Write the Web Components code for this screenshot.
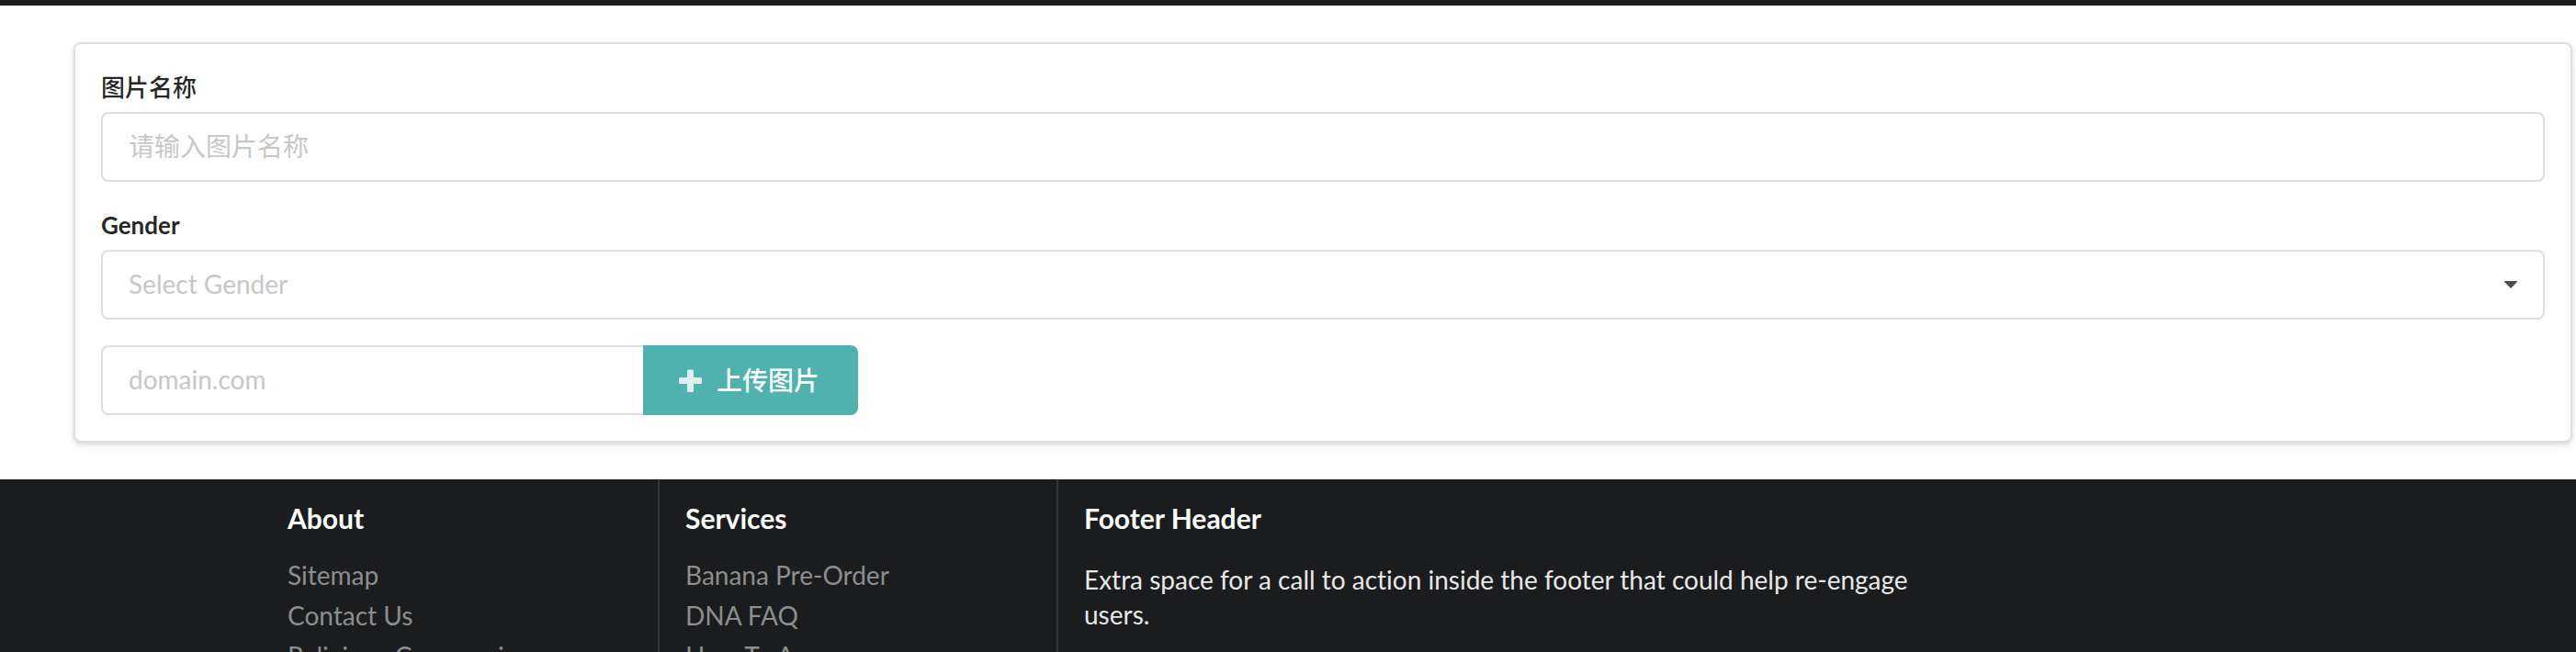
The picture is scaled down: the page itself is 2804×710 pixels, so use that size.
<!DOCTYPE html>
<html lang="zh-CN">
<head>
<meta charset="utf-8">
<title>图片上传</title>
<style>
html { height: 100%; }
body { margin: 0; height: 100%; overflow: hidden; background: #fff; color: rgba(0,0,0,.87); font: 28px/40px Lato, "Noto Sans CJK SC", sans-serif; font-variant-ligatures: none; }
</style>
</head>
<body>
<app-page>
  <form-card>
    <text-field label="图片名称" placeholder="请输入图片名称" lang="zh-CN"></text-field>
    <select-field label="Gender" placeholder="Select Gender"></select-field>
    <upload-field placeholder="domain.com">上传图片</upload-field>
  </form-card>
  <page-footer slot="footer">
    <footer-column heading="About">
      <footer-link>Sitemap</footer-link>
      <footer-link>Contact Us</footer-link>
      <footer-link>Religious Ceremonies</footer-link>
    </footer-column>
    <footer-column heading="Services" divided>
      <footer-link>Banana Pre-Order</footer-link>
      <footer-link>DNA FAQ</footer-link>
      <footer-link>How To Access</footer-link>
    </footer-column>
    <footer-column heading="Footer Header" divided>
      <footer-note>Extra space for a call to action inside the footer that could help re-engage users.</footer-note>
    </footer-column>
  </page-footer>
</app-page>
<script>
const define = (name, render) => customElements.define(name, class extends HTMLElement {
  constructor() {
    super();
    this.attachShadow({ mode: "open" }).innerHTML = render(this);
  }
});
const attr = (el, name) => el.getAttribute(name) || "";

const fieldStyle = `
  *, ::before { box-sizing: border-box; }
  :host { display: block; }
  label { display: block; margin-bottom: 8px; font-size: 26px; line-height: 38px; font-weight: 700; }
  :host([lang="zh-CN"]) label { font-weight: 500; }
  input, select { display: block; width: 100%; height: 76px; margin: 0; padding: 0 28px 2px; border: 2px solid #dededf; border-radius: 8px; background: #fff; color: rgba(0,0,0,.87); font: inherit; font-variant-ligatures: none; outline: none; }
  ::placeholder { color: #c7c7c7; opacity: 1; }
`;

define("app-page", () => `
  <style>
    :host { display: block; }
    header { height: 6px; box-sizing: border-box; background: #1b1c1d; border-bottom: 1px solid #151116; }
    main { padding: 40px 4px 40px 80px; }
  </style>
  <header></header>
  <main><slot></slot></main>
  <slot name="footer"></slot>`);

define("form-card", () => `
  <style>
    :host { display: block; }
    form { display: flex; flex-direction: column; gap: 28px; padding: 28px; border: 2px solid #dededf; border-radius: 8px; background: #fff; box-shadow: 0 2px 4px rgba(34,36,38,.12), 0 4px 12px rgba(34,36,38,.06); }
  </style>
  <form><slot></slot></form>`);

define("text-field", el => `
  <style>${fieldStyle}</style>
  <label for="field">${attr(el, "label")}</label>
  <input id="field" type="text" placeholder="${attr(el, "placeholder")}">`);

define("select-field", el => `
  <style>${fieldStyle}
    .box { display: grid; align-items: center; }
    select, svg { grid-area: 1 / 1; }
    select { appearance: none; color: #c7c7c7; }
    svg { justify-self: end; width: 14px; height: 8px; margin-right: 30px; pointer-events: none; }
  </style>
  <label for="field">${attr(el, "label")}</label>
  <div class="box">
    <select id="field"><option value="">${attr(el, "placeholder")}</option></select>
    <svg viewBox="0 0 14 8" fill="#4c4c4d" aria-hidden="true"><path d="M0 0H14V1L7 8L0 1Z"/></svg>
  </div>`);

define("upload-field", el => `
  <style>${fieldStyle}
    .row { display: flex; }
    input { width: 590px; border-right: 0; border-radius: 8px 0 0 8px; }
    button { display: flex; align-items: center; gap: 16px; height: 76px; padding: 0 42px 0 38px; border: 0; border-radius: 0 8px 8px 0; background: #50b2ae; color: #fff; font: inherit; font-weight: 500; line-height: 28px; }
    svg { width: 26px; height: 26px; }
  </style>
  <div class="row">
    <input type="text" aria-label="${attr(el, "placeholder")}" placeholder="${attr(el, "placeholder")}">
    <button type="button">
      <svg viewBox="0 0 26 26" fill="#dcf0ef" aria-hidden="true"><path d="M11.500 1.500H15.500Q17 1.500 17 3V10H24.500Q26 10 26 11.500V15.500Q26 17 24.500 17H17V24.500Q17 26 15.500 26H11.500Q10 26 10 24.500V17H2.500Q1 17 1 15.500V11.500Q1 10 2.500 10H10V3Q10 1.500 11.500 1.500Z"/></svg>
      <span><slot></slot></span>
    </button>
  </div>`);

define("page-footer", () => `
  <style>
    :host { display: block; background: #1b1c1d; color: #fff; }
    footer { display: grid; grid-template-columns: 431fr 434fr 1010fr 359fr; max-width: 2234px; margin: 0 auto; }
  </style>
  <footer><slot></slot></footer>`);

define("footer-column", el => `
  <style>
    :host { display: block; padding: 22px 28px 28px; }
    :host([divided]) { border-left: 2px solid #353637; }
    h4 { margin: 0 0 20px; font-size: 30px; line-height: 40px; font-weight: 700; }
  </style>
  <h4>${attr(el, "heading")}</h4>
  <slot></slot>`);

define("footer-link", () => `
  <style>
    :host { display: block; line-height: 44px; }
    a { color: #8d8e8e; text-decoration: none; }
  </style>
  <a href="#"><slot></slot></a>`);

define("footer-note", () => `
  <style>
    :host { display: block; }
    p { margin: 0; padding-top: 8px; color: #e8e8e8; line-height: 38px; }
  </style>
  <p><slot></slot></p>`);
</script>
</body>
</html>
